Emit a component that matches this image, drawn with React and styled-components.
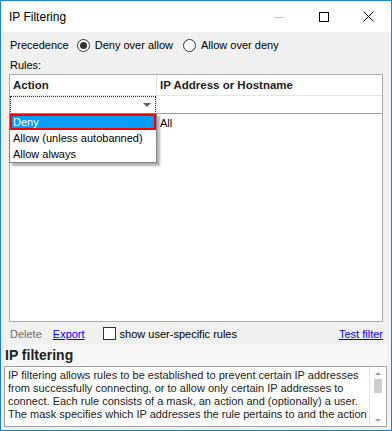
import React from 'react';
import styled, { createGlobalStyle } from 'styled-components';

const Global = createGlobalStyle`
  html, body { margin: 0; padding: 0; background: #fff; }
  * { box-sizing: border-box; }
`;

const Window = styled.div`
  width: 392px;
  height: 431px;
  border: 1px solid #1883d7;
  display: flex;
  flex-direction: column;
  font-family: "Liberation Sans", Arial, sans-serif;
  font-size: 11px;
  color: #000;
  background: #f0f0f0;
`;

const TitleBar = styled.div`
  height: 31px;
  background: #fff;
  display: flex;
  align-items: center;
  padding-left: 8px;
  flex-shrink: 0;
`;

const Title = styled.div`
  flex: 1;
  font-size: 12px;
`;

const CaptionButton = styled.div`
  width: 45px;
  height: 31px;
  display: flex;
  align-items: center;
  justify-content: center;
`;

const Client = styled.div`
  flex: 1;
  display: flex;
  flex-direction: column;
  padding: 0 8px;
`;

const PrecedenceRow = styled.div`
  height: 26px;
  display: flex;
  align-items: center;
  padding-left: 1px;
`;

const RadioLabel = styled.label`
  display: flex;
  align-items: center;
  margin-left: ${p => p.$gap}px;
  gap: 5px;
`;

const RadioCircle = styled.span`
  width: 13px;
  height: 13px;
  border-radius: 50%;
  border: 1px solid #333;
  background: #fff;
  display: flex;
  align-items: center;
  justify-content: center;
  &::after {
    content: '';
    width: 7px;
    height: 7px;
    border-radius: 50%;
    background: ${p => (p.$checked ? '#333' : 'transparent')};
  }
`;

const RulesLabel = styled.div`
  height: 16px;
  line-height: 14px;
  padding-left: 1px;
`;

const Table = styled.div`
  position: relative;
  height: 248px;
  background: #fff;
  border: 1px solid #adadad;
  display: grid;
  grid-template-columns: 147px 1fr;
  grid-template-rows: 21px 18px 18px 1fr;
`;

const HeaderCell = styled.div`
  font-weight: bold;
  font-size: 11.5px;
  color: #222;
  display: flex;
  align-items: center;
  padding-left: 3px;
  border-bottom: 1px solid #e5e5e5;
  border-right: ${p => (p.$sep ? '1px solid #e5e5e5' : 'none')};
`;

const EditCell = styled.div`
  border-bottom: 1px solid #a0a0a0;
  border-right: ${p => (p.$sep ? '1px solid #e5e5e5' : 'none')};
  position: relative;
`;

const Combo = styled.div`
  position: absolute;
  inset: 0 0 -1px 0;
  border: 1px dotted #333;
  background: #fff;
  display: flex;
  align-items: center;
  justify-content: flex-end;
  padding-right: 4px;
`;

const Arrow = styled.span`
  width: 0;
  height: 0;
  border-left: 4px solid transparent;
  border-right: 4px solid transparent;
  border-top: 4px solid #606060;
`;

const DataCell = styled.div`
  display: flex;
  align-items: center;
  padding-left: 3px;
`;

const Dropdown = styled.div`
  position: absolute;
  left: -1px;
  top: 38px;
  width: 148px;
  background: #fff;
  border: 1px solid #828282;
  box-shadow: 3px 3px 2px rgba(0, 0, 0, 0.3);
  z-index: 2;
`;

const Option = styled.div`
  height: 16px;
  line-height: 16px;
  padding-left: 3px;
  white-space: nowrap;
  background: ${p => (p.$selected ? '#00a0fa' : 'transparent')};
  color: ${p => (p.$selected ? '#fff' : '#000')};
  outline: ${p => (p.$selected ? '2px solid #f00' : 'none')};
  outline-offset: -2px;
`;

const Toolbar = styled.div`
  height: 22px;
  display: flex;
  align-items: center;
  padding-top: 1px;
`;

const DisabledText = styled.span`
  color: #6d6d6d;
  padding-left: 1px;
`;

const Link = styled.a`
  color: #0000ff;
  text-decoration: underline;
  margin-left: ${p => p.$ml || 0}px;
  cursor: pointer;
`;

const CheckLabel = styled.label`
  display: flex;
  align-items: center;
  gap: 4px;
  margin-left: 18px;
  flex: 1;
`;

const CheckBox = styled.span`
  width: 13px;
  height: 13px;
  border: 1px solid #333;
  background: #fff;
`;

const InfoPanel = styled.div`
  flex: 1;
  margin: 0 -5px 3px -5px;
  background: #f6f6f6;
  display: flex;
  flex-direction: column;
  padding: 0 1px 0 0;
`;

const InfoHeading = styled.div`
  height: 22px;
  display: flex;
  align-items: center;
  padding-left: 1px;
  font-weight: bold;
  font-size: 14px;
  color: #222;
`;

const InfoBox = styled.div`
  flex: 1;
  display: flex;
  background: #fff;
  border: 1px solid #a0a0a0;
  overflow: hidden;
`;

const InfoText = styled.div`
  flex: 1;
  padding: 2px 3px;
  line-height: 13px;
  color: #222;
  overflow: hidden;
`;

const Line = styled.div`
  white-space: nowrap;
`;

const ScrollBar = styled.div`
  width: 17px;
  border-left: 1px solid #e0e0e0;
  display: flex;
  flex-direction: column;
  align-items: center;
  padding: 5px 0 4px;
`;

const ScrollArrow = styled.span`
  width: 0;
  height: 0;
  border-left: 3px solid transparent;
  border-right: 3px solid transparent;
  ${p => (p.$up ? 'border-bottom: 3px solid #a0a0a0;' : 'border-top: 3px solid #a0a0a0;')}
`;

const Thumb = styled.div`
  width: 8px;
  height: 14px;
  background: #cdcdcd;
  margin-top: 4px;
  flex: 0 0 auto;
`;

const Spacer = styled.div`
  flex: 1;
`;

const App = () => {
  return (
    <>
      <Global />
      <Window>
        <TitleBar>
          <Title>IP Filtering</Title>
          <CaptionButton>
            <svg width="10" height="10" viewBox="0 0 10 10">
              <line x1="0" y1="5.5" x2="10" y2="5.5" stroke="#c8c8c8" strokeWidth="1" />
            </svg>
          </CaptionButton>
          <CaptionButton>
            <svg width="10" height="10" viewBox="0 0 10 10">
              <rect x="0.5" y="0.5" width="9" height="9" fill="none" stroke="#000" strokeWidth="1" />
            </svg>
          </CaptionButton>
          <CaptionButton>
            <svg width="11" height="11" viewBox="0 0 11 11">
              <path d="M0.5 0.5 L10.5 10.5 M10.5 0.5 L0.5 10.5" stroke="#000" strokeWidth="1" />
            </svg>
          </CaptionButton>
        </TitleBar>
        <Client>
          <PrecedenceRow>
            <span>Precedence</span>
            <RadioLabel $gap={8}>
              <RadioCircle $checked />
              Deny over allow
            </RadioLabel>
            <RadioLabel $gap={10}>
              <RadioCircle />
              Allow over deny
            </RadioLabel>
          </PrecedenceRow>
          <RulesLabel>Rules:</RulesLabel>
          <Table>
            <HeaderCell $sep>Action</HeaderCell>
            <HeaderCell>IP Address or Hostname</HeaderCell>
            <EditCell $sep>
              <Combo>
                <Arrow />
              </Combo>
            </EditCell>
            <EditCell />
            <DataCell />
            <DataCell>All</DataCell>
            <Dropdown>
              <Option $selected>Deny</Option>
              <Option>Allow (unless autobanned)</Option>
              <Option>Allow always</Option>
            </Dropdown>
          </Table>
          <Toolbar>
            <DisabledText>Delete</DisabledText>
            <Link $ml={11}>Export</Link>
            <CheckLabel>
              <CheckBox />
              show user-specific rules
            </CheckLabel>
            <Link>Test filter</Link>
          </Toolbar>
          <InfoPanel>
            <InfoHeading>IP filtering</InfoHeading>
            <InfoBox>
              <InfoText>
                <Line>IP filtering allows rules to be established to prevent certain IP addresses</Line>
                <Line>from successfully connecting, or to allow only certain IP addresses to</Line>
                <Line>connect. Each rule consists of a mask, an action and (optionally) a user.</Line>
                <Line>The mask specifies which IP addresses the rule pertains to and the action</Line>
              </InfoText>
              <ScrollBar>
                <ScrollArrow $up />
                <Thumb />
                <Spacer />
                <ScrollArrow />
              </ScrollBar>
            </InfoBox>
          </InfoPanel>
        </Client>
      </Window>
    </>
  );
};

export default App;
